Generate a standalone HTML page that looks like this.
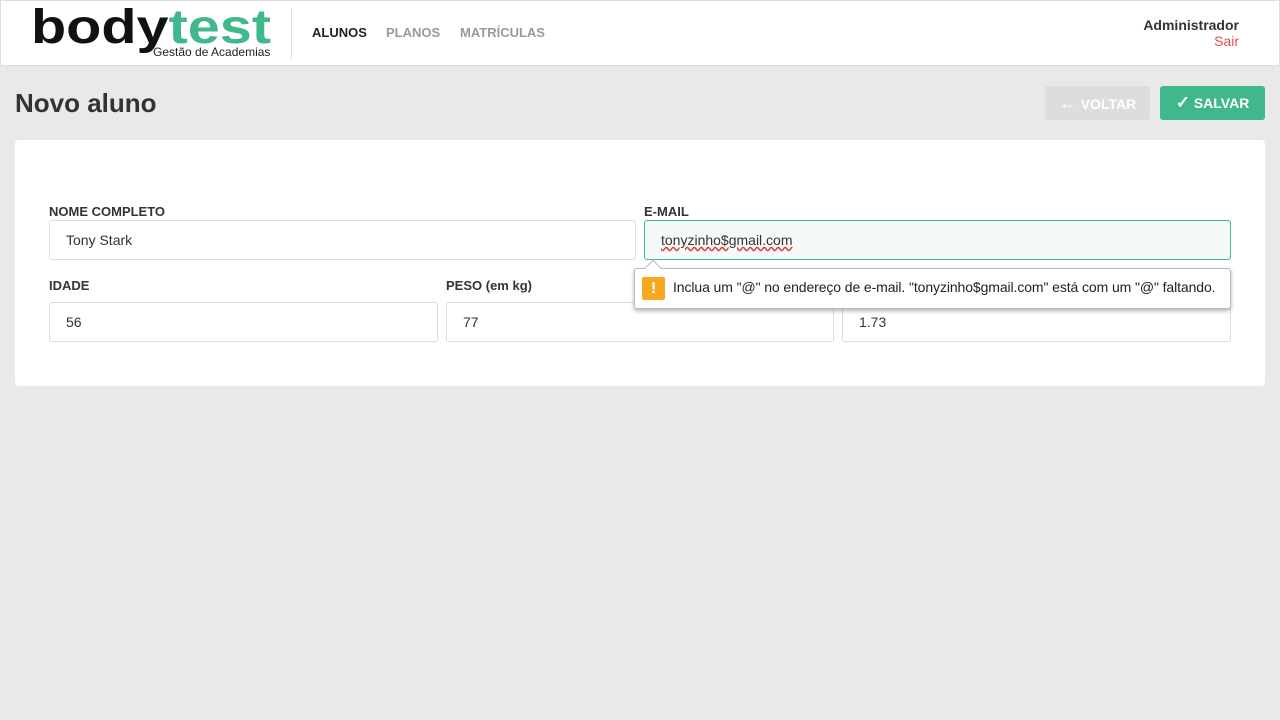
<!DOCTYPE html>
<html><head><meta charset="utf-8"><style>
*{box-sizing:border-box;margin:0;padding:0}
body{width:1280px;height:720px;background:#e9e9e9;font-family:"Liberation Sans",sans-serif;color:#333;position:relative;overflow:hidden}
.hdr{position:absolute;left:0;top:0;width:1280px;height:66px;background:#fff;border:1px solid #ddd}
.abs{position:absolute}
.lbl{position:absolute;font-size:13px;font-weight:bold;color:#333}
.inp{position:absolute;height:40px;background:#fff;border:1px solid #ddd;border-radius:3px;font-size:14px;padding-left:16px;line-height:38px;color:#333}
</style></head><body>
<div class="hdr">
 <div class="abs" style="left:30px;top:-3px;font-size:48px;font-weight:bold;letter-spacing:0px;line-height:60px;color:#111;transform:scaleX(1.2);transform-origin:left top">body<span style="color:#41b78c">test</span></div>
 <div class="abs" style="left:152px;top:44px;font-size:12px;color:#222">Gestão de Academias</div>
 <div class="abs" style="left:290px;top:8px;width:1px;height:50px;background:#ddd"></div>
 <div class="abs" style="left:311px;top:24px;font-size:13px;font-weight:bold;color:#222">ALUNOS</div>
 <div class="abs" style="left:385px;top:24px;font-size:13px;font-weight:bold;color:#999">PLANOS</div>
 <div class="abs" style="left:459px;top:24px;font-size:13px;font-weight:bold;color:#999">MATRÍCULAS</div>
 <div class="abs" style="right:40px;top:16px;font-size:14px;font-weight:bold;color:#333;text-align:right">Administrador</div>
 <div class="abs" style="right:40px;top:32px;font-size:14px;color:#e94d4d">Sair</div>
</div>
<div class="abs" style="left:15px;top:88px;font-size:26px;font-weight:bold;color:#333">Novo aluno</div>
<div class="abs" style="left:1045px;top:86px;width:105px;height:34px;background:#ddd;border-radius:3px;color:#fff;font-size:14px;font-weight:bold;line-height:34px;text-align:center"><span style="font-size:18px">←</span> VOLTAR</div>
<div class="abs" style="left:1160px;top:86px;width:105px;height:34px;background:#41b78c;border-radius:3px;color:#fff;font-size:14px;font-weight:bold;line-height:34px;text-align:center"><span style="font-size:17px">✓</span> SALVAR</div>
<div class="abs" style="left:15px;top:140px;width:1250px;height:246px;background:#fff;border-radius:4px"></div>
<div class="lbl" style="left:49px;top:204px">NOME COMPLETO</div>
<div class="inp" style="left:49px;top:220px;width:587px">Tony Stark</div>
<div class="lbl" style="left:644px;top:204px">E-MAIL</div>
<div class="inp" style="left:644px;top:220px;width:587px;border-color:#41b78c;background:#f5f9f7"><span style="text-decoration:underline wavy #d33">tonyzinho$gmail.com</span></div>
<div class="lbl" style="left:49px;top:278px">IDADE</div>
<div class="inp" style="left:49px;top:302px;width:389px">56</div>
<div class="lbl" style="left:446px;top:278px">PESO (em kg)</div>
<div class="inp" style="left:446px;top:302px;width:388px">77</div>
<div class="inp" style="left:842px;top:302px;width:389px">1.73</div>
<div class="abs" style="left:634px;top:268px;width:597px;height:41px;background:#fff;border:1px solid #bbb;border-radius:3px;box-shadow:0 2px 4px rgba(0,0,0,.3)"></div>
<div class="abs" style="left:647px;top:262px;width:12px;height:12px;background:#fff;border-left:1px solid #bbb;border-top:1px solid #bbb;transform:rotate(45deg)"></div>
<div class="abs" style="left:642px;top:277px;width:23px;height:23px;background:#f6a821;border-radius:2px;color:#fff;font-weight:bold;font-size:16px;text-align:center;line-height:23px">!</div>
<div class="abs" style="left:673px;top:279px;font-size:14px;color:#222;letter-spacing:-0.1px">Inclua um "@" no endereço de e-mail. "tonyzinho$gmail.com" está com um "@" faltando.</div>
</body></html>
